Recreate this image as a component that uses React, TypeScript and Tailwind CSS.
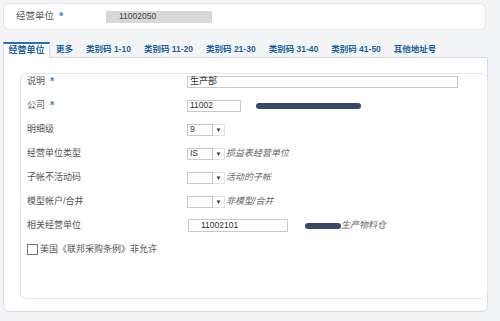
import React from "react";

const tabs = ["更多", "类别码 1-10", "类别码 11-20", "类别码 21-30", "类别码 31-40", "类别码 41-50", "其他地址号"];

function Star() {
  return <span className="ml-[5px] text-[11px] font-bold leading-none text-[#2b8ae0]">*</span>;
}

function Blob({ w }: { w: number }) {
  // redacted text smudge
  return (
    <span
      className="inline-block h-[6px] rounded-full bg-[#3a4867] blur-[0.6px]"
      style={{ width: w }}
    />
  );
}

function Select({ value, note }: { value: string; note?: string }) {
  return (
    <div className="flex items-center">
      <div className="flex h-[12px] w-[26px] items-center border border-[#c9c9c9] bg-white pl-[2px] text-[8.5px] text-[#333]">
        {value}
      </div>
      <div className="flex h-[12px] w-[12px] items-center justify-center border-y border-r border-[#e2e2e2] bg-white">
        <span className="text-[6px] leading-none text-[#333]">▼</span>
      </div>
      {note && <span className="ml-[1px] text-[9px] italic text-[#666]">{note}</span>}
    </div>
  );
}

function Row({ label, star, children }: { label: string; star?: boolean; children: React.ReactNode }) {
  return (
    <div className="flex h-[13px] items-center">
      <div className="flex w-[160px] items-center text-[9px] text-[#555]">
        {label}
        {star && <Star />}
      </div>
      {children}
    </div>
  );
}

export default function App() {
  return (
    <div
      className="h-[321px] w-[500px] overflow-hidden bg-[#f3f4f6] px-[3px] pt-[3px]"
      style={{ fontFamily: '"Liberation Sans", "Noto Sans CJK SC", sans-serif' }}
    >
      {/* header */}
      <div className="flex h-[27px] w-[483px] items-center rounded-md border border-[#e3e6ea] bg-white pl-[12px]">
        <div className="flex w-[90px] items-center text-[9.5px] text-[#555]">
          经营单位
          <Star />
        </div>
        <div className="flex h-[12px] w-[106px] items-center bg-[#d8d8d8] pl-[13px] text-[8.5px] text-[#444]">
          11002050
        </div>
      </div>

      {/* tabs */}
      <div className="mt-[12px] flex h-[15px] items-end">
        <div className="relative z-10 -mb-px flex h-[16px] w-[47px] items-center justify-center border-x border-t-2 border-x-[#d5dbe3] border-t-[#2a6fb5] bg-white text-[9px] font-bold text-[#1f5f9f]">
          经营单位
        </div>
        <div className="flex h-[15px] items-center gap-[13px] pl-[6px] text-[8.5px] font-bold text-[#1f5f9f]">
          {tabs.map((t) => (
            <span key={t} className="whitespace-nowrap">{t}</span>
          ))}
        </div>
      </div>

      {/* outer panel */}
      <div className="h-[255px] w-[485px] rounded-b-md border border-[#d5dbe3] bg-white pl-[16px] pt-[15px]">
        <div className="flex h-[226px] w-[468px] flex-col gap-[11px] rounded-md border border-[#e3e6ea] bg-white pl-[6px] pt-[1px]">
          <Row label="说明" star>
            <div className="flex h-[12px] w-[271px] items-center border border-[#c9c9c9] pl-[2px] text-[9px] text-[#333]">生产部</div>
          </Row>
          <Row label="公司" star>
            <div className="flex h-[12px] w-[54px] items-center border border-[#c9c9c9] pl-[2px] text-[8.5px] text-[#333]">11002</div>
            <span className="ml-[15px] flex items-center"><Blob w={105} /></span>
          </Row>
          <Row label="明细级">
            <Select value="9" />
          </Row>
          <Row label="经营单位类型">
            <Select value="IS" note="损益表经营单位" />
          </Row>
          <Row label="子帐不活动码">
            <Select value="" note="活动的子帐" />
          </Row>
          <Row label="模型帐户/合并">
            <Select value="" note="非模型/合并" />
          </Row>
          <Row label="相关经营单位">
            <div className="ml-[1px] flex h-[13px] w-[100px] items-center border border-[#c9c9c9] pl-[12px] text-[8.5px] text-[#333]">11002101</div>
            <span className="ml-[17px] flex items-center"><Blob w={36} /></span>
            <span className="text-[9px] italic text-[#666]">生产物料仓</span>
          </Row>
          <div className="flex h-[13px] items-center">
            <span className="h-[11px] w-[11px] border border-[#777] bg-white" />
            <span className="ml-[2px] whitespace-nowrap text-[9px] text-[#555]">美国《联邦采购条例》非允许</span>
          </div>
        </div>
      </div>
    </div>
  );
}
